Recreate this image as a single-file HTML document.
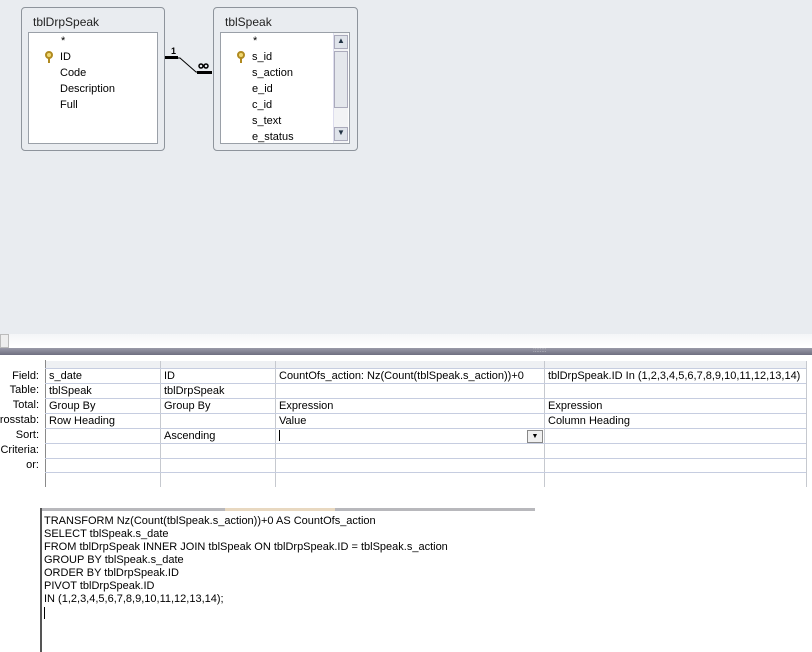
<!DOCTYPE html>
<html><head><style>
body{margin:0;width:812px;height:652px;position:relative;overflow:hidden;background:#fff;font-family:"Liberation Sans",sans-serif;font-size:11px;color:#000}
.a{position:absolute}
.box{position:absolute;border:1px solid #8e949c;border-radius:4px;background:#e9ecf0}
.box .t{position:absolute;left:11px;top:7px;font-size:12px;color:#222}
.in{position:absolute;background:#fff;border:1px solid #9aa0a8}
.f{position:absolute;font-size:11px}
.lab{position:absolute;right:0;text-align:right;font-size:11px;white-space:nowrap}
.vl{position:absolute;top:361px;height:126px;width:1px;background:#c6c9cf}
.hl{position:absolute;left:45px;width:761px;height:1px;background:#c6cde0}
.c{position:absolute;font-size:11px}
.key{position:absolute;width:4px;height:4px;border:2px solid #b08a20;border-radius:50%;background:#f0d870}
.key:after{content:"";position:absolute;left:1px;top:5px;width:2px;height:5px;background:#b08a20}
</style></head><body>
<div class="a" style="left:0;top:0;width:812px;height:336px;background:#e9ecf0"></div>
<div class="box" style="left:21px;top:7px;width:142px;height:142px"><div class="t">tblDrpSpeak</div>
<div class="in" style="left:6px;top:24px;width:128px;height:110px"></div></div>
<div class="f" style="left:61px;top:35px">*</div>
<div class="key" style="left:45px;top:51px"></div>
<div class="f" style="left:60px;top:51px">ID</div>
<div class="f" style="left:60px;top:67px">Code</div>
<div class="f" style="left:60px;top:83px">Description</div>
<div class="f" style="left:60px;top:99px">Full</div>
<div class="box" style="left:213px;top:7px;width:143px;height:142px"><div class="t">tblSpeak</div>
<div class="in" style="left:6px;top:24px;width:128px;height:110px"></div></div>
<div class="a" style="left:333px;top:33px;width:14px;height:110px;background:#f2f3f5;border-left:1px solid #dde"></div>
<div class="a" style="left:334px;top:35px;width:12px;height:12px;background:#dfe3ea;border:1px solid #aab"></div>
<div class="a" style="left:334px;top:51px;width:12px;height:55px;background:#e4e7ec;border:1px solid #aab"></div>
<div class="a" style="left:334px;top:127px;width:12px;height:12px;background:#dfe3ea;border:1px solid #aab"></div>
<div class="f" style="left:337px;top:36px;font-size:8px;color:#234">&#9650;</div>
<div class="f" style="left:337px;top:128px;font-size:8px;color:#234">&#9660;</div>
<div class="f" style="left:253px;top:35px">*</div>
<div class="key" style="left:237px;top:51px"></div>
<div class="f" style="left:252px;top:51px">s_id</div>
<div class="f" style="left:252px;top:67px">s_action</div>
<div class="f" style="left:252px;top:83px">e_id</div>
<div class="f" style="left:252px;top:99px">c_id</div>
<div class="f" style="left:252px;top:115px">s_text</div>
<div class="f" style="left:252px;top:131px">e_status</div>
<svg class="a" style="left:164px;top:44px" width="50" height="32"><path d="M1 14H16L32 28H48" stroke="#000" fill="none"/><path d="M1 13.5H14M33 28.5H48" stroke="#000" stroke-width="3"/><text x="7" y="10" font-size="9" font-weight="bold" font-family="Liberation Sans">1</text><circle cx="37" cy="22" r="2" stroke="#000" stroke-width="1.5" fill="none"/><circle cx="42" cy="22" r="2" stroke="#000" stroke-width="1.5" fill="none"/></svg>
<div class="a" style="left:0;top:334px;width:812px;height:13px;background:linear-gradient(#f4f5f7,#fff)"></div>
<div class="a" style="left:0;top:334px;width:7px;height:12px;border:1px solid #bbb;background:#eee"></div>
<div class="a" style="left:0;top:348px;width:812px;height:7px;background:linear-gradient(#9a9aa8,#6e6e80)"></div>
<div class="a" style="left:533px;top:350px;font-size:6px;color:#ddd;line-height:3px">::::::::</div>
<div class="a" style="left:45px;top:360px;width:1px;height:127px;background:#8a8a8a"></div>
<div class="a" style="left:46px;top:361px;width:760px;height:7px;background:#eef0f3"></div>
<div class="vl" style="left:160px"></div><div class="vl" style="left:275px"></div><div class="vl" style="left:544px"></div><div class="vl" style="left:806px"></div>
<div class="hl" style="top:368px"></div><div class="hl" style="top:383px"></div><div class="hl" style="top:398px"></div><div class="hl" style="top:413px"></div><div class="hl" style="top:428px"></div><div class="hl" style="top:443px"></div><div class="hl" style="top:458px"></div><div class="hl" style="top:472px"></div>
<div style="position:absolute;left:0;top:0;width:39px;height:480px;overflow:hidden">
<div class="lab" style="top:370px">Field:</div><div class="lab" style="top:384px">Table:</div><div class="lab" style="top:399px">Total:</div><div class="lab" style="top:414px">Crosstab:</div><div class="lab" style="top:429px">Sort:</div><div class="lab" style="top:444px">Criteria:</div><div class="lab" style="top:459px">or:</div></div>
<div class="c" style="left:49px;top:370px">s_date</div><div class="c" style="left:164px;top:370px">ID</div><div class="c" style="left:279px;top:370px">CountOfs_action: Nz(Count(tblSpeak.s_action))+0</div><div class="c" style="left:548px;top:370px">tblDrpSpeak.ID In (1,2,3,4,5,6,7,8,9,10,11,12,13,14)</div>
<div class="c" style="left:49px;top:385px">tblSpeak</div><div class="c" style="left:164px;top:385px">tblDrpSpeak</div>
<div class="c" style="left:49px;top:400px">Group By</div><div class="c" style="left:164px;top:400px">Group By</div><div class="c" style="left:279px;top:400px">Expression</div><div class="c" style="left:548px;top:400px">Expression</div>
<div class="c" style="left:49px;top:415px">Row Heading</div><div class="c" style="left:279px;top:415px">Value</div><div class="c" style="left:548px;top:415px">Column Heading</div>
<div class="c" style="left:164px;top:430px">Ascending</div>
<div class="a" style="left:279px;top:430px;width:1px;height:11px;background:#000"></div>
<div class="a" style="left:527px;top:430px;width:14px;height:11px;border:1px solid #888;background:#f0f0f0;font-size:7px;text-align:center;line-height:12px">&#9660;</div>
<div class="a" style="left:40px;top:508px;width:495px;height:3px;background:#b8b8bc"></div>
<div class="a" style="left:225px;top:508px;width:110px;height:3px;background:#e8d8c0"></div>
<div class="a" style="left:40px;top:508px;width:2px;height:144px;background:#555"></div>
<div class="a" style="left:44px;top:515px;font-size:11px;line-height:13px">TRANSFORM Nz(Count(tblSpeak.s_action))+0 AS CountOfs_action<br>SELECT tblSpeak.s_date<br>FROM tblDrpSpeak INNER JOIN tblSpeak ON tblDrpSpeak.ID = tblSpeak.s_action<br>GROUP BY tblSpeak.s_date<br>ORDER BY tblDrpSpeak.ID<br>PIVOT tblDrpSpeak.ID<br>IN (1,2,3,4,5,6,7,8,9,10,11,12,13,14);</div>
<div class="a" style="left:44px;top:607px;width:1px;height:12px;background:#000"></div>
</body></html>
